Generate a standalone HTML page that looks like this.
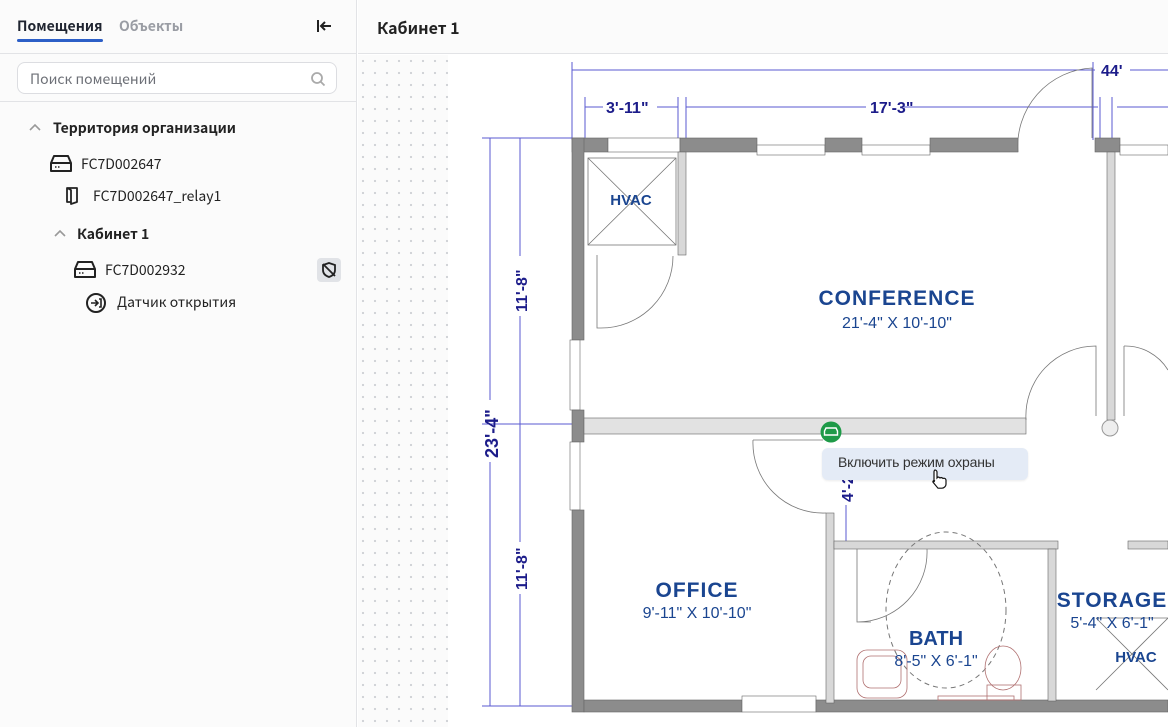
<!DOCTYPE html>
<html><head><meta charset="utf-8"><style>
*{margin:0;padding:0;box-sizing:border-box}
body{width:1168px;height:727px;overflow:hidden;background:#fff;font-family:"Noto Sans CJK SC","Liberation Sans",sans-serif;color:#222;position:relative}
#left{position:absolute;left:0;top:0;width:357px;height:727px;background:#fbfbfb;border-right:1px solid #e2e3e6}
.tabs{height:54px;border-bottom:1px solid #e2e3e6;position:relative}
.tab{position:absolute;top:16px;font-size:14px;font-weight:600}
.t1{left:17px;color:#1f2430}
.t1:after{content:"";position:absolute;left:0;right:0;top:23px;height:3px;background:#2c5fc7;border-radius:2px}
.t2{left:119px;color:#9a9da4}
.search{position:absolute;left:17px;top:62px;width:320px;height:32px;border:1px solid #dcdde1;border-radius:8px;background:#fff;font-size:14px;color:#6c6f76;padding:6px 0 0 12px}
.div2{position:absolute;left:0;right:0;top:101px;border-top:1px solid #e2e3e6}
.row{position:absolute;font-size:14px;color:#222;white-space:nowrap}
.b{font-weight:600}
#head{position:absolute;left:358px;top:0;right:0;height:54px;border-bottom:1px solid #e2e3e6;background:#fbfbfb}
#head span{position:absolute;left:19px;top:15px;font-size:16px;font-weight:600;color:#222}
#canvas{position:absolute;left:358px;top:55px;right:0;bottom:0;background-color:#fbfbfb;background-image:radial-gradient(circle,#d0d2d6 1px,transparent 1.3px);background-size:12px 12px;background-position:-1px 0}
.tip{position:absolute;left:822px;top:448px;width:206px;height:32px;background:#e4ebf6;border-radius:6px;font-size:14px;color:#333;padding:6px 0 0 16px;font-family:"Liberation Sans",sans-serif;letter-spacing:-.2px;box-shadow:0 1px 2px rgba(0,0,0,.08)}
</style></head><body>
<div id="left">
 <div class="tabs"><span class="tab t1">Помещения</span><span class="tab t2">Объекты</span>
  <svg style="position:absolute;left:316px;top:18px" width="18" height="16" viewBox="0 0 18 16"><path d="M2 2v12M15 8H5M9 4L5 8l4 4" stroke="#222" stroke-width="2" fill="none"/></svg></div>
 <div class="search">Поиск помещений
  <svg style="position:absolute;right:10px;top:8px" width="16" height="16" viewBox="0 0 16 16"><circle cx="7" cy="7" r="5" stroke="#aaa" stroke-width="1.8" fill="none"/><path d="M11 11l3.5 3.5" stroke="#aaa" stroke-width="1.8"/></svg></div>
 <div class="div2"></div>
 <svg style="position:absolute;left:28px;top:122px" width="14" height="10"><path d="M2 8l5-5 5 5" stroke="#999" stroke-width="1.6" fill="none"/></svg>
 <div class="row b" style="left:53px;top:118px">Территория организации</div>
 <svg style="position:absolute;left:49px;top:154px" width="24" height="19"><path d="M5 2h14l3 7v8H2V9z M2 9h20" stroke="#222" stroke-width="2" fill="none" stroke-linejoin="round"/><path d="M6 13h1.5M9 13h1.5" stroke="#222" stroke-width="1.6"/></svg>
 <div class="row" style="left:81px;top:154px">FC7D002647</div>
 <svg style="position:absolute;left:64px;top:186px" width="16" height="20"><path d="M3 2h10v14l-6 2V4z M3 2v14h4" stroke="#222" stroke-width="1.8" fill="none" stroke-linejoin="round"/></svg>
 <div class="row" style="left:93px;top:186px">FC7D002647_relay1</div>
 <svg style="position:absolute;left:53px;top:228px" width="14" height="10"><path d="M2 8l5-5 5 5" stroke="#999" stroke-width="1.6" fill="none"/></svg>
 <div class="row b" style="left:77px;top:224px">Кабинет 1</div>
 <svg style="position:absolute;left:73px;top:260px" width="24" height="19"><path d="M5 2h14l3 7v8H2V9z M2 9h20" stroke="#222" stroke-width="2" fill="none" stroke-linejoin="round"/><path d="M6 13h1.5M9 13h1.5" stroke="#222" stroke-width="1.6"/></svg>
 <div class="row" style="left:105px;top:260px">FC7D002932</div>
 <div style="position:absolute;left:317px;top:258px;width:24px;height:24px;background:#e1e3e7;border-radius:4px"><svg width="24" height="24"><path d="M12 5l6 2v5c0 4-3 6-6 7-3-1-6-3-6-7V7z" stroke="#222" stroke-width="1.8" fill="none"/><path d="M6 6l12 12" stroke="#222" stroke-width="1.8"/></svg></div>
 <svg style="position:absolute;left:85px;top:292px" width="22" height="22"><circle cx="11" cy="11" r="9" stroke="#222" stroke-width="2" fill="none"/><path d="M6 11h6M10 8l3 3-3 3M14 7h2v8h-2" stroke="#222" stroke-width="1.6" fill="none"/></svg>
 <div class="row" style="left:117px;top:292px">Датчик открытия</div>
</div>
<div id="head"><span>Кабинет 1</span></div>
<div id="canvas"></div>
<svg style="position:absolute;left:0;top:0" width="1168" height="727" viewBox="0 0 1168 727">
 <rect x="448" y="55" width="720" height="672" fill="#fff"/>
 <g stroke="#5a5ad0" stroke-width="1" fill="none">
  <path d="M572 70H1095M1130 70H1168M572 62v78M1093 62v78"/>
  <path d="M585 107H603M657 107H678M686 107H866M904 107H1098M1117 107H1168M585 97v45M678 97v45M686 97v45M1100 97v45M1112 97v45"/>
  <path d="M482 138H572M490 138v262M490 462v244M520 138v118M520 316v108M482 424H580M520 424v118M520 594v112M482 706H572"/>
  <path d="M846 452v20M846 505v36"/>
 </g>
 <g font-family="Liberation Sans,sans-serif" fill="#1c1c8a" font-size="16" font-weight="bold">
  <text x="606" y="113">3'-11"</text><text x="870" y="113">17'-3"</text><text x="1101" y="76">44'</text>
  <text transform="translate(527 312) rotate(-90)">11'-8"</text>
  <text transform="translate(527 590) rotate(-90)">11'-8"</text>
  <text transform="translate(498 458) rotate(-90)" font-size="18">23'-4"</text>
  <text transform="translate(853 502) rotate(-90)">4'-2</text>
 </g>
 <g fill="#8c8c8c" stroke="#666" stroke-width=".6">
  <rect x="572" y="138" width="36" height="14"/><rect x="608" y="138" width="72" height="14" fill="#fff"/>
  <rect x="680" y="138" width="77" height="14"/><rect x="757" y="145" width="68" height="10" fill="#fff"/>
  <rect x="825" y="138" width="37" height="14"/><rect x="862" y="145" width="68" height="10" fill="#fff"/>
  <rect x="930" y="138" width="88" height="14"/>
  <rect x="1095" y="138" width="25" height="14"/><rect x="1120" y="145" width="48" height="10" fill="#fff"/>
  <rect x="572" y="138" width="12" height="202"/><rect x="570" y="340" width="10" height="70" fill="#fff"/>
  <rect x="572" y="410" width="12" height="32"/><rect x="570" y="442" width="10" height="68" fill="#fff"/>
  <rect x="572" y="510" width="12" height="202"/>
  <rect x="584" y="700" width="158" height="12"/><rect x="742" y="696" width="74" height="16" fill="#fff"/>
  <rect x="816" y="700" width="352" height="12"/>
  <rect x="826" y="513" width="8" height="190" fill="#d8d8d8"/>
  <rect x="834" y="541" width="224" height="8" fill="#d8d8d8"/>
  <rect x="1048" y="549" width="8" height="152" fill="#d8d8d8"/>
  <rect x="1128" y="541" width="40" height="8" fill="#d8d8d8"/>
  <rect x="584" y="418" width="442" height="16" fill="#e2e2e2"/>
  <rect x="678" y="152" width="8" height="103" fill="#d8d8d8"/>
  <rect x="1107" y="152" width="8" height="268" fill="#d8d8d8"/>
 </g>
 <g stroke="#777" stroke-width=".8" fill="none">
  <rect x="588" y="158" width="88" height="87"/><path d="M588 158L676 245M676 158L588 245"/>
  <path d="M597 255v73h4M601 328A72 72 0 0 0 673 256"/>
  <path d="M1018 152A78 78 0 0 1 1092 68v70"/>
  <path d="M1026 420A70 70 0 0 1 1096 346v70M1124 346v70M1124 346A50 50 0 0 1 1168 370"/>
  <path d="M753 440h70M753 440A70 70 0 0 0 826 513"/>
  <path d="M857 549v73h14M857 622A70 70 0 0 0 927 549"/>
  <path d="M1096 690l72-72M1096 618l72 72M1096 618h72"/>
 </g>
 <ellipse cx="946" cy="610" rx="60" ry="78" stroke="#777" stroke-dasharray="5 4" fill="none"/>
 <g stroke="#b07070" stroke-width=".8" fill="none">
  <rect x="857" y="650" width="50" height="48" rx="10"/><rect x="863" y="656" width="38" height="32" rx="8"/>
  <ellipse cx="1003" cy="668" rx="18" ry="22"/><rect x="987" y="685" width="34" height="15"/>
  <rect x="938" y="696" width="76" height="4"/>
 </g>
 <circle cx="1110" cy="428" r="8" fill="#eee" stroke="#999"/>
 <g font-family="Liberation Sans,sans-serif" fill="#1a4590" text-anchor="middle" font-weight="bold">
  <text x="631" y="205" font-size="15">HVAC</text>
  <text x="897" y="305" font-size="21" letter-spacing="1">CONFERENCE</text>
  <text x="897" y="328" font-size="16" font-weight="normal">21'-4" X 10'-10"</text>
  <text x="697" y="597" font-size="21" letter-spacing="1">OFFICE</text>
  <text x="697" y="618" font-size="16" font-weight="normal">9'-11" X 10'-10"</text>
  <text x="936" y="645" font-size="20">BATH</text>
  <text x="936" y="666" font-size="16" font-weight="normal">8'-5" X 6'-1"</text>
  <text x="1112" y="607" font-size="21" letter-spacing="1">STORAGE</text>
  <text x="1112" y="628" font-size="16" font-weight="normal">5'-4" X 6'-1"</text>
  <text x="1136" y="662" font-size="15">HVAC</text>
 </g>
 <circle cx="831" cy="432" r="10.5" fill="#1e9a48"/>
 <path d="M826 428h10l1.5 3v4h-13v-4z" stroke="#fff" stroke-width="1.4" fill="none"/>
</svg>
<div class="tip">Включить режим охраны</div>
<svg style="position:absolute;left:930px;top:468px" width="18" height="22" viewBox="0 0 18 22"><path d="M5 2c1 0 2 1 2 2v6l1-1c1 0 2 1 2 1l1-.5c1 0 2 1 2 1l1-.3c1 0 2 1 2 2v4c0 2-2 4-4 4H8l-5-6c-.5-1 .5-2 1.5-1.5L4 14V4c0-1 .5-2 1-2z" fill="#fff" stroke="#111" stroke-width="1.2"/></svg>
</body></html>
